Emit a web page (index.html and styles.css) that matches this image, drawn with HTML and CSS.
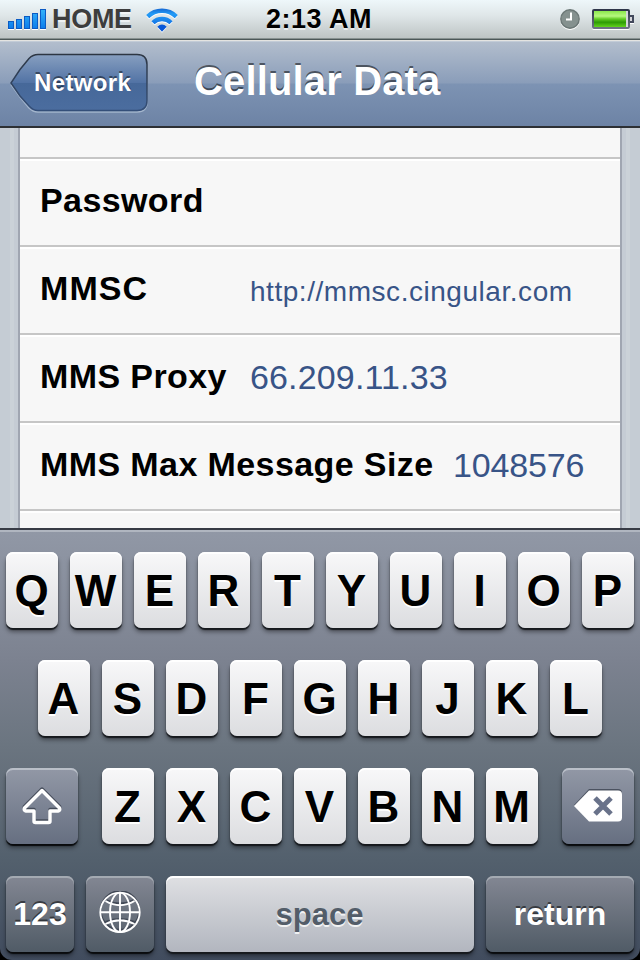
FILE: index.html
```html
<!DOCTYPE html>
<html lang="en">
<head>
  <meta charset="UTF-8" />
  <meta name="viewport" content="width=device-width, initial-scale=1.0"/>
  <title>Cellular Data</title>
  <link rel="stylesheet" href="styles.css">
</head>
<body>
  <div class="phone">
    <header class="status-bar">
      <div class="status-left">
        <svg class="signal" width="38" height="21" viewBox="0 0 38 21">
          <defs>
            <linearGradient id="blue" x1="0" y1="0" x2="0" y2="21" gradientUnits="userSpaceOnUse">
              <stop offset="0" stop-color="#35b4fa"/>
              <stop offset="1" stop-color="#0878ea"/>
            </linearGradient>
          </defs>
          <g fill="url(#blue)" stroke="#0b5bc4" stroke-width="1">
            <rect x="0.5" y="12.5" width="5" height="7"/>
            <rect x="8.5" y="10.5" width="5" height="9"/>
            <rect x="16.5" y="7.5" width="5" height="12"/>
            <rect x="24.5" y="4.5" width="5" height="15"/>
            <rect x="32.5" y="0.5" width="5" height="19"/>
          </g>
        </svg>
        <span class="carrier">HOME</span>
        <svg class="wifi" width="32" height="24" viewBox="0 0 32 24">
          <defs>
            <linearGradient id="wave" x1="0" y1="0" x2="0" y2="24" gradientUnits="userSpaceOnUse">
              <stop offset="0" stop-color="#1262d0"/>
              <stop offset="0.25" stop-color="#249cf6"/>
              <stop offset="1" stop-color="#0757d8"/>
            </linearGradient>
          </defs>
          <g fill="none" stroke="url(#wave)" stroke-width="4.4">
            <path d="M1.700 8.600 A20.500 20.500 0 0 1 30.300 8.600"/>
            <path d="M7 14.700 A12.700 12.700 0 0 1 25 14.700"/>
          </g>
          <path d="M11.300 18.800 Q16 14 20.700 18.800 L16 23.800 Z" fill="#0757d8"/>
        </svg>
      </div>
      <span class="clock">2:13 AM</span>
      <div class="status-right">
        <svg class="alarm" width="20" height="20" viewBox="0 0 20 20">
          <circle cx="10" cy="10" r="9.2" fill="#85918f" stroke="#6b7776" stroke-width="1.4"/>
          <path d="M11 3.5 V10.6 H6" fill="none" stroke="#fff" stroke-width="2"/>
        </svg>
        <svg class="battery" width="42" height="20" viewBox="0 0 42 20">
          <defs>
            <linearGradient id="charge" x1="0" y1="0" x2="0" y2="1">
              <stop offset="0" stop-color="#8be84b"/>
              <stop offset="0.32" stop-color="#b6f87f"/>
              <stop offset="0.5" stop-color="#62cc24"/>
              <stop offset="0.7" stop-color="#2d9a05"/>
              <stop offset="1" stop-color="#62d31d"/>
            </linearGradient>
            <linearGradient id="shell" x1="0" y1="0" x2="0" y2="1">
              <stop offset="0" stop-color="#2e3549"/>
              <stop offset="1" stop-color="#6d7283"/>
            </linearGradient>
          </defs>
          <rect x="1" y="1" width="36" height="18" rx="1" fill="#d5d5da" stroke="url(#shell)" stroke-width="2"/>
          <rect x="2" y="2" width="32" height="16" fill="url(#charge)"/>
          <path d="M38 7 H41 V13 H38" fill="#d5d5da" stroke="#41485b" stroke-width="2"/>
        </svg>
      </div>
    </header>

    <nav class="nav-bar">
      <a class="back">
        <svg class="back-shape" width="138" height="60" viewBox="0 0 138 60">
          <defs>
            <linearGradient id="back" x1="0" y1="0" x2="0" y2="1">
              <stop offset="0" stop-color="#879fc0"/>
              <stop offset="0.5" stop-color="#5273a5"/>
              <stop offset="0.51" stop-color="#466899"/>
              <stop offset="1" stop-color="#4b6d9f"/>
            </linearGradient>
            <linearGradient id="edge" x1="0" y1="0" x2="0" y2="1">
              <stop offset="0" stop-color="#2d3643"/>
              <stop offset="1" stop-color="#344f79"/>
            </linearGradient>
          </defs>
          <path d="M28 2 H127 Q137 2 137 12 V49 Q137 59 127 59 H28 Q23 59 19 55 L10 44 L1 31.500" fill="none" stroke="#a3b5cc" stroke-width="1.500"/>
          <path d="M28 1.500 H127 Q137 1.500 137 11.500 V47.500 Q137 57.500 127 57.500 H28 Q23 57.500 19 53 L10 43 L1 30 L10 16.500 L19 5.500 Q23 1.500 28 1.500 Z" fill="url(#back)" stroke="url(#edge)" stroke-width="1.500"/>
        </svg>
        <span class="back-label">Network</span>
      </a>
      <h1 class="title">Cellular Data</h1>
    </nav>

    <main class="settings">
      <div class="group">
        <div class="row row-cut"></div>
        <div class="row"><span class="label">Password</span></div>
        <div class="row"><span class="label label-short label-caps">MMSC</span><span class="value value-small">http://mmsc.cingular.com</span></div>
        <div class="row"><span class="label label-short">MMS Proxy</span><span class="value">66.209.11.33</span></div>
        <div class="row"><span class="label label-long">MMS Max Message Size</span><span class="value value-number">1048576</span></div>
        <div class="row"></div>
      </div>
    </main>

    <div class="keyboard">
      <div class="keys">
        <div class="key-row">
          <span class="key">Q</span><span class="key">W</span><span class="key">E</span><span class="key">R</span><span class="key">T</span><span class="key">Y</span><span class="key">U</span><span class="key">I</span><span class="key">O</span><span class="key">P</span>
        </div>
        <div class="key-row">
          <span class="key">A</span><span class="key">S</span><span class="key">D</span><span class="key">F</span><span class="key">G</span><span class="key">H</span><span class="key">J</span><span class="key">K</span><span class="key">L</span>
        </div>
        <div class="key-row key-row-low">
          <span class="key key-dark key-shift">
            <svg width="42" height="38" viewBox="0 0 42 38">
              <g fill="none" stroke-width="3.500" stroke-linejoin="round">
                <path d="M21 2 L38.500 19.500 Q39.500 22 37 22.500 H29 V32.500 Q29 34 27.500 34 H14.500 Q13 34 13 32.500 V22.500 H5 Q2.500 22 3.500 19.500 Z" stroke="#454c5a"/>
                <path d="M21 3.500 L38.500 21 Q39.500 23.500 37 24 H29 V34 Q29 35.500 27.500 35.500 H14.500 Q13 35.500 13 34 V24 H5 Q2.500 23.500 3.500 21 Z" stroke="#fff"/>
              </g>
            </svg>
          </span>
          <div class="key-group">
            <span class="key">Z</span><span class="key">X</span><span class="key">C</span><span class="key">V</span><span class="key">B</span><span class="key">N</span><span class="key">M</span>
          </div>
          <span class="key key-dark key-delete">
            <svg width="48" height="34" viewBox="0 0 48 34">
              <path d="M15 0 H44 Q48 0 48 4 V27 Q48 31 44 31 H15 L0 16 Z" fill="#4b5260"/>
              <path d="M15 1.500 H44 Q48 1.500 48 5.500 V28.500 Q48 32.500 44 32.500 H15 L0 17 Z" fill="#fff"/>
              <path d="M21 9 L37 25 M37 9 L21 25" stroke="#69728a" stroke-width="5"/>
            </svg>
          </span>
        </div>
        <div class="key-row key-row-bottom">
          <span class="key key-dark key-small">123</span>
          <span class="key key-dark key-small">
            <svg width="42" height="46" viewBox="0 0 42 46">
              <g fill="none" stroke="#414855" stroke-width="2">
                <circle cx="21" cy="19.500" r="19.300"/>
                <path d="M6.500 9 Q21 16 35.500 9 M6.500 31 Q21 25 35.500 31"/>
              </g>
              <g fill="none" stroke="#fff" stroke-width="1.900">
                <circle cx="21" cy="21.300" r="19.700"/>
                <ellipse cx="21" cy="21.300" rx="10" ry="19.700"/>
                <path d="M21 1.500 V41 M1.500 21.300 H40.500 M6.500 10 Q21 18.500 35.500 10 M6.500 33 Q21 25.500 35.500 33"/>
              </g>
            </svg>
          </span>
          <span class="key key-space">space</span>
          <span class="key key-dark key-return">return</span>
        </div>
      </div>
    </div>
  </div>
</body>
</html>
```
FILE: styles.css
```css
body {
  margin: 0;
  background: #000;
  font-family: "Liberation Sans", Arial, sans-serif;
}
.phone {
  width: 640px;
  height: 960px;
  display: flex;
  flex-direction: column;
  overflow: hidden;
}

/* status bar */
.status-bar {
  box-sizing: border-box;
  height: 40px;
  display: grid;
  grid-template-columns: 1fr auto 1fr;
  align-items: center;
  padding: 0 6px 0 8px;
  background: linear-gradient(#eef7fa, #dfe6e8 40%, #bdc4c4 38px);
  border-bottom: 1px solid #4c5858;
  box-shadow: inset 0 -1px #879190;
  font-size: 27px;
  font-weight: bold;
  text-shadow: 0 2px rgba(255,255,255,0.6);
}
.status-left, .status-right {
  display: flex;
  align-items: center;
}
.status-right {
  justify-content: flex-end;
  gap: 12px;
}
.signal {
  filter: drop-shadow(0 1px #fff);
}
.carrier {
  margin-left: 6px;
  color: #3d3d3d;
  letter-spacing: -0.3px;
}
.clock {
  margin-right: 4px;
  letter-spacing: 0.5px;
}
.wifi {
  margin: 1px 0 0 14px;
  filter: drop-shadow(0 1px #fff);
}
.alarm, .battery {
  margin-bottom: 1px;
  filter: drop-shadow(0 1px #fff);
}

/* navigation */
.nav-bar {
  box-sizing: border-box;
  height: 88px;
  display: flex;
  align-items: flex-start;
  padding: 13px 10px 0;
  background: linear-gradient(#b4bfce, #8a9db9 43px, #7d93b3 44px, #6d83a5 86px);
  border-bottom: 2px solid #2d3034;
  box-shadow: inset 0 1px #e4e4e1, inset 0 2px #c3ccd7;
  color: #fff;
}
.back {
  width: 138px;
  height: 60px;
  display: grid;
}
.back-shape, .back-label {
  grid-area: 1 / 1;
}
.back-label {
  padding-left: 24px;
  font-size: 24px;
  font-weight: bold;
  letter-spacing: 0.35px;
  line-height: 59px;
  text-shadow: 0 -2px rgba(0,0,0,0.45);
}
.title {
  margin: 0 0 0 46px;
  font-size: 40px;
  letter-spacing: 0.15px;
  line-height: 56px;
  text-shadow: 0 -2px rgba(0,0,0,0.5);
}

/* settings list */
.settings {
  height: 400px;
  padding: 0 18px;
  overflow: hidden;
  background: linear-gradient(90deg, #c5ccd4 10px, #cbd2d8 10px, #cbd2d8 14px, #c5ccd4 14px, #c5ccd4 626px, #cbd2d8 626px, #cbd2d8 630px, #c5ccd4 630px);
}
.group {
  background: #f7f7f7;
  border-left: 2px solid #a0a6b1;
  border-right: 2px solid #a0a6b1;
}
.row {
  box-sizing: border-box;
  height: 88px;
  display: flex;
  align-items: center;
  padding: 0 20px;
  border-top: 2px solid #c6c6c6;
  box-shadow: inset 0 2px #fff;
}
.row-cut {
  height: 29px;
  border-top: 0;
  box-shadow: none;
}
.label {
  font-size: 34px;
  font-weight: bold;
  letter-spacing: 0.4px;
  line-height: 42px;
  margin-bottom: 4px;
  white-space: nowrap;
}
.label-short {
  width: 210px;
}
.label-caps {
  letter-spacing: 1.1px;
}
.label-long {
  width: 413px;
}
.value {
  color: #385487;
  font-size: 34px;
  letter-spacing: 0.15px;
  line-height: 42px;
  margin-bottom: 2px;
}
.value-small {
  font-size: 28px;
  letter-spacing: 0.54px;
  padding-top: 6px;
}
.value-number {
  letter-spacing: -0.15px;
}

/* keyboard */
.keyboard {
  box-sizing: border-box;
  height: 432px;
  border-top: 2px solid #373b45;
  background: #000;
}
.keys {
  box-sizing: border-box;
  height: 430px;
  display: flex;
  flex-direction: column;
  gap: 32px;
  padding: 22px 6px 0;
  border-radius: 0 0 12px 12px;
  background: linear-gradient(#9198a6, #7c8290 130px, #6b7580 215px, #53606d 330px, #414c5e);
  box-shadow: inset 0 2px #b0b6c0;
}
.key-row {
  display: flex;
  justify-content: center;
  gap: 12px;
}
.key-row-low {
  justify-content: space-between;
}
.key-group {
  display: flex;
  gap: 12px;
}
.key {
  box-sizing: border-box;
  width: 52px;
  height: 76px;
  display: flex;
  justify-content: center;
  align-items: center;
  padding: 2px 1px 0 0;
  border-radius: 7px;
  background: linear-gradient(#f8f8f9, #dcdde0);
  box-shadow: inset 0 2px #fff, 0 2px 1px #16191d, 0 4px 4px rgba(0,0,0,0.4);
  color: #000;
  font-size: 44px;
  font-weight: bold;
  text-shadow: 0 2px #fff;
}
.key-dark {
  padding: 0;
  background: linear-gradient(#9298a6, #666f81);
  box-shadow: inset 0 2px #b9bfc8, 0 2px 1px #090b0d, 0 4px 4px rgba(0,0,0,0.4);
  color: #fff;
  text-shadow: 0 -2px rgba(0,0,0,0.5);
}
.key-shift, .key-delete {
  width: 72px;
}
.key-row-bottom .key {
  font-size: 32px;
}
.key-row-bottom .key-dark {
  background: linear-gradient(#838793, #505b66);
  box-shadow: inset 0 2px #a4aab2, 0 2px 1px #090b0d, 0 4px 4px rgba(0,0,0,0.4);
}
.key-small {
  width: 68px;
}
.key-row-bottom .key-space {
  width: 308px;
  background: linear-gradient(#dfe0e3, #b2b6bf);
  color: #535d69;
  font-size: 31px;
  text-shadow: 0 2px rgba(255,255,255,0.8);
}
.key-return {
  width: 148px;
}
```
